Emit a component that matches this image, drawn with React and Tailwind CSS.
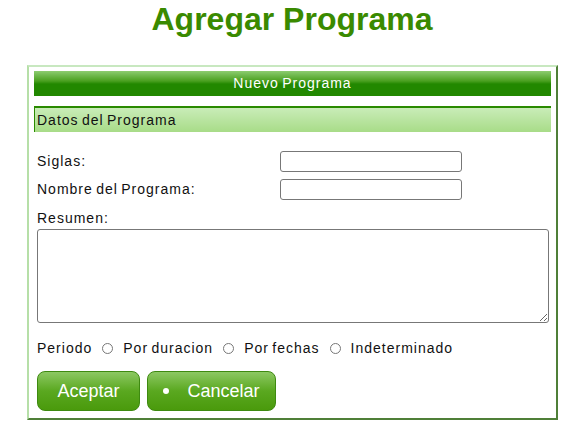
import React from "react";

const font = { fontFamily: '"Liberation Sans", Arial, sans-serif' };

function Radio({ label }) {
  return (
    <label className="flex items-center gap-[10px]">
      <span className="w-[11px] h-[11px] rounded-full border border-[#777] bg-white" />
      <span>{label}</span>
    </label>
  );
}

export default function App() {
  return (
    <div className="w-[572px] h-[424px] bg-white overflow-hidden" style={font}>
      <h1 className="text-center text-[32px] leading-[37px] font-bold text-[#3a8a00] pt-[1px] pl-[12px]">
        Agregar Programa
      </h1>

      <div className="ml-[27px] mt-[27px] w-[531px] h-[355px] border-l-2 border-t-2 border-l-[#b6dfa8] border-t-[#c8e8c0] border-r-2 border-b-2 border-r-[#4f7f38] border-b-[#4f7f38] px-[5px] pt-[4px] text-[14px] text-[#111] tracking-[1px] [word-spacing:-1.5px]">
        <div className="h-[25px] bg-[linear-gradient(#8ccc70_0%,#4aa020_40%,#228800_52%,#228800_100%)] text-white text-center leading-[25px]">
          Nuevo Programa
        </div>

        <div className="mt-[10px] h-[26px] border-t-2 border-l border-[#2a8a00] bg-[linear-gradient(#c9ecb8,#a8dc88)] pl-[2px] leading-[24px]">
          Datos del Programa
        </div>

        <div className="mt-[19px] pl-[3px] pr-[4px]">
          <div className="flex items-center h-[21px]">
            <span className="w-[243px]">Siglas:</span>
            <input className="w-[182px] h-[21px] rounded-[3px] border border-[#777] bg-white" />
          </div>
          <div className="flex items-center h-[21px] mt-[7px]">
            <span className="w-[243px]">Nombre del Programa:</span>
            <input className="w-[182px] h-[21px] rounded-[3px] border border-[#777] bg-white" />
          </div>
          <div className="mt-[8px] leading-[20px]">Resumen:</div>
          <textarea className="block mt-[1px] w-[512px] h-[94px] rounded-[3px] border border-[#777] bg-white resize" />

          <div className="flex items-center gap-[10px] mt-[15px] h-[20px]">
            <span>Periodo</span>
            <Radio label="Por duracion" />
            <Radio label="Por fechas" />
            <Radio label="Indeterminado" />
          </div>

          <div className="flex gap-[7px] mt-[13px] tracking-normal [word-spacing:normal]">
            <button className="w-[103px] h-[40px] rounded-[8px] border border-[#3e8a10] bg-[linear-gradient(#8cc862,#5aa820_50%,#4a9a0c)] text-white text-[18px]">
              Aceptar
            </button>
            <button className="w-[129px] h-[40px] rounded-[8px] border border-[#3e8a10] bg-[linear-gradient(#8cc862,#5aa820_50%,#4a9a0c)] text-white text-[18px] flex items-center justify-center gap-[18px]">
              <span className="w-[6px] h-[6px] rounded-full bg-white" />
              <span>Cancelar</span>
            </button>
          </div>
        </div>
      </div>
    </div>
  );
}
